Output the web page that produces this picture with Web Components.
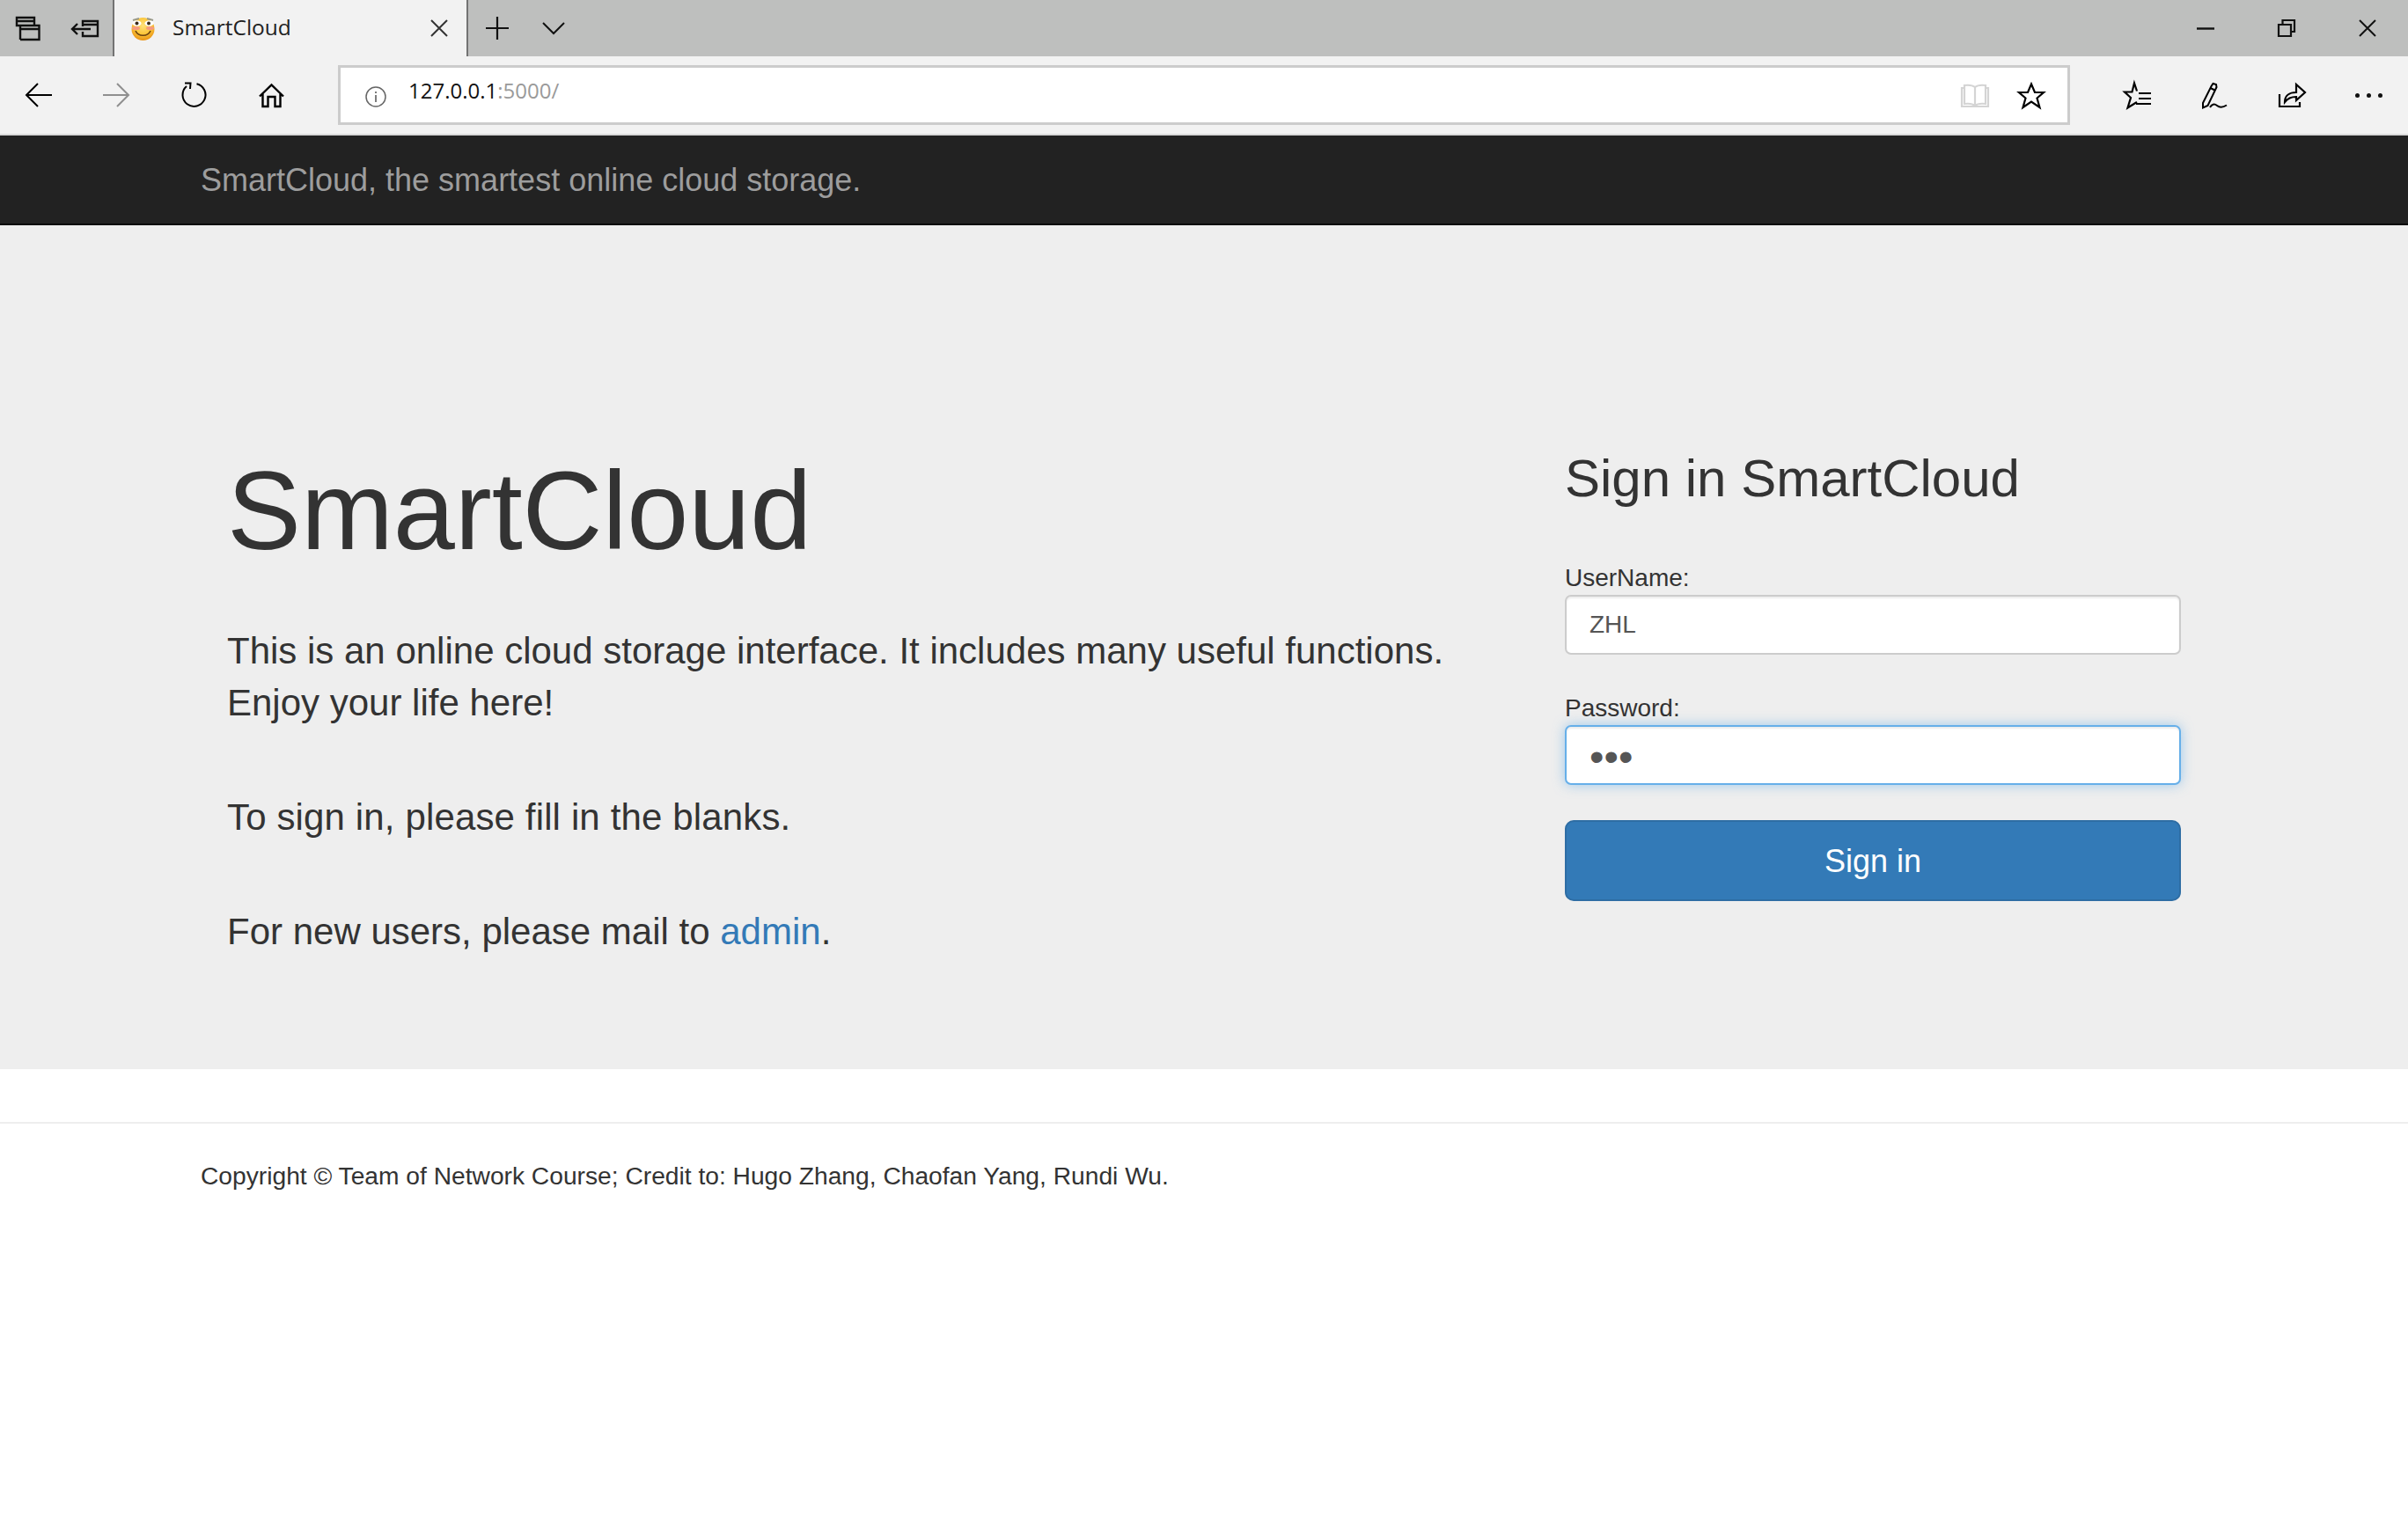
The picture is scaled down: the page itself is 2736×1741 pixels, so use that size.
<!DOCTYPE html>
<html lang="en">
<head>
<meta charset="utf-8">
<title>SmartCloud</title>
<style>
    html, body { margin: 0; padding: 0; background: #fff; }
    body { font-family: "Liberation Sans", Arial, sans-serif; color: #333; }
</style>
</head>
<body>
<browser-tabs></browser-tabs>
<browser-toolbar></browser-toolbar>
<site-navbar>SmartCloud, the smartest online cloud storage.</site-navbar>
<site-jumbotron>
    <span slot="title">SmartCloud</span>
    <login-form slot="form"></login-form>
</site-jumbotron>
<site-footer>Copyright © Team of Network Course; Credit to: Hugo Zhang, Chaofan Yang, Rundi Wu.</site-footer>

<script>
const ICONS = {
    tabs: [28, 27, `<path d="M5 26V9.5M5 10H26.5V26H5M5 14H26.5M5.5 10H1V1H21V10M1 5H21" />`],
    aside: [31, 19, `<path d="M13 7V1H30V18H13V13M13 5H30M1 10H22M7 4L1 10L7 16" />`],
    close: [20, 20, `<path d="M1 1L19 19M19 1L1 19" />`],
    plus: [26, 26, `<path d="M13 0V26M0 13H26" />`],
    chevron: [26, 14, `<path d="M1 1L13 13L25 1" />`],
    min: [20, 3, `<path d="M0 1.5H20" />`],
    restore: [20, 20, `<path d="M5.5 5V1H19V14H15M1 6H15V19H1Z" />`],
    back: [30, 28, `<path d="M30 14H1M14 1L1 14L14 27" />`],
    forward: [30, 28, `<path d="M0 14H29M16 1L29 14L16 27" />`],
    refresh: [28, 28, `<path d="M17.5 1.2A13 13 0 1 1 6 4M4 0.5H10.5L10 7" />`],
    home: [29, 27, `<path d="M1 14.5L14.5 1.5L28 14.5M4.5 11.5V26H10.5V15H18.5V26H24.5V11.5" />`],
    book: [32, 27, `<path d="M16 4C13 1.5 8 1.5 4 2V23C8 22.5 13 22.5 16 25C19 22.5 24 22.5 28 23V2C24 1.5 19 1.5 16 4ZM16 4V25M4 5H1V26H31V5H28" />`],
    star: [30, 29, `<path d="M15 1.5L19 11H29L21.5 17.5L24.5 28L15 21.5L5.5 28L8.5 17.5L1 11H11Z" />`],
    favlist: [31, 31, `<path d="M15 23L4.5 29.5L8 18L1 11.5H9.5L12 1.5L15 10.5M17 13H31M17 19H31M14 25H31" />`],
    pen: [28, 29, `<path d="M1 28.5L1 23L10.5 4L12.5 1L16 2L16.5 5L6.5 26ZM9.5 6L15.5 9M9 28C11 24.5 14 23.5 17 26C20 28.5 24 28 28 25.5" />`],
    share: [31, 28, `<path d="M1 13V27H24V22M7 22C7 15 12 11 20 11V2L30 11L20 20V16C14 16 10 18 7 22Z" />`]
};

class uiIcon extends HTMLElement {
    constructor() {
        super();
        this.attachShadow({ mode: "open" });
    }

    connectedCallback() {
        const [w, h, body] = ICONS[this.getAttribute("name")];
        const size = this.getAttribute("stroke") || "2.4";
        this.shadowRoot.innerHTML = /*html */`
            <style>
                :host { display: flex; align-items: center; justify-content: center; width: var(--slot, 88px); height: 100%; flex: none; }
                svg { display: block; overflow: visible; fill: none; stroke: currentColor; }
            </style>
            <svg width="${w}" height="${h}" viewBox="0 0 ${w} ${h}" stroke-width="${size}">${body}</svg>
        `;
    }
}
customElements.define("ui-icon", uiIcon);

class browserTabs extends HTMLElement {
    constructor() {
        super();
        this.attachShadow({ mode: "open" });
    }

    getTemplate() {
        const template = document.createElement("template");
        template.innerHTML = /*html */`
            <div class="left">
                <ui-icon name="tabs" style="--slot:64px"></ui-icon>
                <ui-icon name="aside" style="--slot:64px"></ui-icon>
            </div>
            <div class="tab">
                <svg class="fav" width="27" height="28" viewBox="0 0 27 28">
                    <defs>
                        <radialGradient id="face" cx="50%" cy="35%" r="70%">
                            <stop offset="0" stop-color="#ffe27a" />
                            <stop offset="0.55" stop-color="#fbc437" />
                            <stop offset="1" stop-color="#e58a10" />
                        </radialGradient>
                    </defs>
                    <circle cx="13.5" cy="15" r="13" fill="url(#face)" />
                    <path d="M2 5L9 3M18 3L25 5" stroke="#9a9a8a" stroke-width="2" fill="none" />
                    <ellipse cx="6.5" cy="8.5" rx="5" ry="3.2" fill="#fff" />
                    <ellipse cx="20.5" cy="8.5" rx="5" ry="3.2" fill="#fff" />
                    <circle cx="6.5" cy="8.5" r="2" fill="#3a2a18" />
                    <circle cx="20" cy="8.5" r="2" fill="#3a2a18" />
                    <ellipse cx="5.5" cy="14" rx="4.5" ry="2" fill="#f59a80" />
                    <ellipse cx="21.5" cy="14" rx="4.5" ry="2" fill="#f59a80" />
                    <path d="M5 17C8 24 19 24 22 17" stroke="#6b4310" stroke-width="1.6" fill="none" />
                </svg>
                <span class="title">SmartCloud</span>
                <ui-icon name="close" stroke="2" style="--slot:38px"></ui-icon>
            </div>
            <ui-icon name="plus" stroke="2.2" style="--slot:63px;margin-left:1px"></ui-icon>
            <ui-icon name="chevron" stroke="2" style="--slot:63px;margin-left:1px"></ui-icon>
            <div class="controls">
                <ui-icon name="min" stroke="2.4" style="--slot:92px"></ui-icon>
                <ui-icon name="restore" stroke="2.2" style="--slot:92px"></ui-icon>
                <ui-icon name="close" stroke="2" style="--slot:92px"></ui-icon>
            </div>
            ${this.getStyle()}
        `;
        return template;
    }

    getStyle() {
        return /*html */`
        <style>
            :host {
                display: flex;
                height: 64px;
                background: #bebfbe;
                color: #111;
                font-family: "Open Sans", "Noto Sans", sans-serif;
            }
            .left { display: flex; width: 128px; flex: none; }
            .tab {
                box-sizing: border-box;
                display: flex;
                align-items: center;
                width: 404px;
                flex: none;
                padding-left: 19px;
                background: #f2f2f2;
                border-left: 2px solid #737373;
                border-right: 2px solid #737373;
            }
            .fav { flex: none; }
            .title { flex: 1; margin: -3px 0 0 20px; font-size: 24.5px; color: #222; }
            .tab ui-icon { margin-right: 12px; color: #333; }
            .controls { display: flex; margin-left: auto; }
        </style>
        `;
    }

    connectedCallback() {
        this.shadowRoot.appendChild(this.getTemplate().content.cloneNode(true));
    }
}
customElements.define("browser-tabs", browserTabs);

class browserToolbar extends HTMLElement {
    constructor() {
        super();
        this.attachShadow({ mode: "open" });
    }

    getTemplate() {
        const template = document.createElement("template");
        template.innerHTML = /*html */`
            <ui-icon name="back" stroke="2"></ui-icon>
            <ui-icon name="forward" stroke="2" style="color:#8f8f8f"></ui-icon>
            <ui-icon name="refresh" stroke="2"></ui-icon>
            <ui-icon name="home" stroke="2.4"></ui-icon>
            <div class="address">
                <svg class="info" width="24" height="24" viewBox="0 0 24 24">
                    <circle cx="12" cy="12" r="11" fill="none" stroke="#666" stroke-width="1.5" />
                    <path d="M12 10V18M12 6V8" stroke="#666" stroke-width="1.7" />
                </svg>
                <span class="url">127.0.0.1<span class="port">:5000/</span></span>
                <ui-icon name="book" stroke="2.2" style="--slot:32px;margin-right:16px;color:#d4d4d4"></ui-icon>
                <ui-icon name="star" stroke="2.2" style="--slot:64px;margin-right:9px"></ui-icon>
            </div>
            <ui-icon name="favlist" stroke="2.2"></ui-icon>
            <ui-icon name="pen" stroke="2"></ui-icon>
            <ui-icon name="share" stroke="2.2"></ui-icon>
            <div class="more"><i></i><i></i><i></i></div>
            ${this.getStyle()}
        `;
        return template;
    }

    getStyle() {
        return /*html */`
        <style>
            :host {
                box-sizing: border-box;
                display: flex;
                align-items: center;
                height: 90px;
                background: #f2f2f2;
                border-bottom: 2px solid #d9d9d9;
                color: #000;
                font-family: "Open Sans", "Noto Sans", sans-serif;
            }
            .address {
                box-sizing: border-box;
                display: flex;
                align-items: center;
                flex: none;
                width: 1968px;
                height: 68px;
                margin: 0 32px;
                background: #fff;
                border: 3px solid #ccc;
            }
            .info { flex: none; margin: 4px 0 0 28px; }
            .url { flex: 1; margin: -11px 0 0 25px; font-size: 24px; color: #111; }
            .port { color: #9a9a9a; }
            .more { display: flex; justify-content: center; gap: 8px; width: 88px; flex: none; margin-left: -1px; }
            .more i { width: 5px; height: 5px; border-radius: 50%; background: #111; }
        </style>
        `;
    }

    connectedCallback() {
        this.shadowRoot.appendChild(this.getTemplate().content.cloneNode(true));
    }
}
customElements.define("browser-toolbar", browserToolbar);

class siteNavbar extends HTMLElement {
    constructor() {
        super();
        this.attachShadow({ mode: "open" });
    }

    connectedCallback() {
        this.shadowRoot.innerHTML = /*html */`
            <style>
                :host {
                    box-sizing: border-box;
                    display: flex;
                    align-items: center;
                    height: 102px;
                    padding: 2px 0 0 228px;
                    background: #222;
                    border-bottom: 2px solid #080808;
                    color: #9d9d9d;
                    font-size: 36px;
                }
            </style>
            <slot></slot>
        `;
    }
}
customElements.define("site-navbar", siteNavbar);

class siteJumbotron extends HTMLElement {
    constructor() {
        super();
        this.attachShadow({ mode: "open" });
    }

    connectedCallback() {
        this.shadowRoot.innerHTML = /*html */`
            <style>
                :host {
                    box-sizing: border-box;
                    display: grid;
                    grid-template-columns: 1fr 700px;
                    height: 959px;
                    padding: 0 258px;
                    background: #eee;
                }
                h1 { margin: 256px 0 60px; font-size: 126px; line-height: 138px; font-weight: 400; color: #333; letter-spacing: -.1px; }
                p { margin: 0 0 71px; font-size: 42px; line-height: 59px; color: #333; }
                p.wide { letter-spacing: .14px; }
                a { color: #337ab7; text-decoration: none; }
            </style>
            <div class="intro">
                <h1><slot name="title"></slot></h1>
                <p>This is an online cloud storage interface. It includes many useful functions.<br>Enjoy your life here!</p>
                <p class="wide">To sign in, please fill in the blanks.</p>
                <p>For new users, please mail to <a href="#">admin</a>.</p>
            </div>
            <slot name="form"></slot>
        `;
    }
}
customElements.define("site-jumbotron", siteJumbotron);

class loginForm extends HTMLElement {
    constructor() {
        super();
        this.attachShadow({ mode: "open" });
    }

    connectedCallback() {
        this.shadowRoot.innerHTML = /*html */`
            <style>
                :host { display: block; padding-top: 254px; font-size: 28px; color: #333; }
                h2 { margin: 0 0 59px; font-size: 60px; line-height: 67px; font-weight: 400; }
                label { display: block; height: 40px; line-height: 41px; }
                .input {
                    box-sizing: border-box;
                    display: flex;
                    align-items: center;
                    height: 68px;
                    margin-bottom: 40px;
                    padding: 0 26px;
                    background: #fff;
                    border: 2px solid #ccc;
                    border-radius: 7px;
                    box-shadow: inset 0 2px 2px rgba(0, 0, 0, .075);
                    color: #555;
                }
                .input.focus {
                    border-color: #66afe9;
                    box-shadow: inset 0 2px 2px rgba(0, 0, 0, .075), 0 0 14px rgba(102, 175, 233, .6);
                }
                .dots { font-size: 47px; line-height: 28px; padding-top: 3px; }
                button {
                    display: block;
                    box-sizing: border-box;
                    width: 100%;
                    height: 92px;
                    padding: 2px 0 0;
                    background: #337ab7;
                    border: 2px solid #2e6da4;
                    border-radius: 10px;
                    color: #fff;
                    font: inherit;
                    font-size: 36px;
                }
            </style>
            <h2>Sign in SmartCloud</h2>
            <label>UserName:</label>
            <div class="input" role="textbox">ZHL</div>
            <label>Password:</label>
            <div class="input focus" role="textbox"><span class="dots">•••</span></div>
            <button type="button">Sign in</button>
        `;
    }
}
customElements.define("login-form", loginForm);

class siteFooter extends HTMLElement {
    constructor() {
        super();
        this.attachShadow({ mode: "open" });
    }

    connectedCallback() {
        this.shadowRoot.innerHTML = /*html */`
            <style>
                :host {
                    display: block;
                    margin-top: 60px;
                    padding: 39px 0 0 228px;
                    border-top: 2px solid #eee;
                    font-size: 28.2px;
                    line-height: 40px;
                    color: #333;
                }
            </style>
            <slot></slot>
        `;
    }
}
customElements.define("site-footer", siteFooter);
</script>
</body>
</html>
